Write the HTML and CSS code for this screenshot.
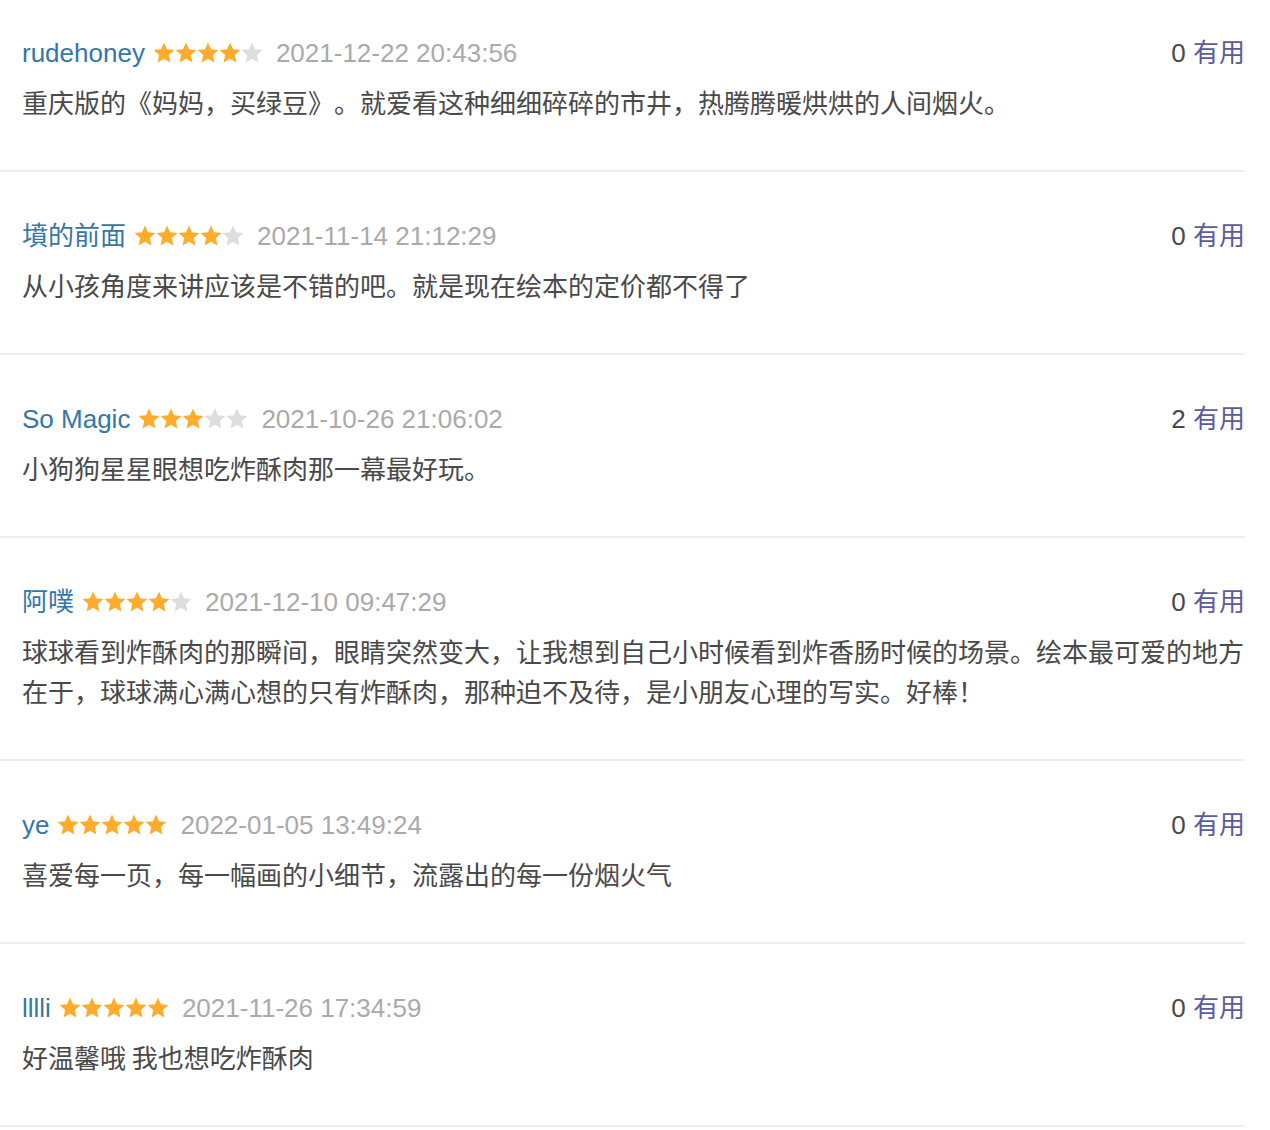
FILE: index.html
```html
<!DOCTYPE html>
<html lang="zh-CN">
<head>
<meta charset="utf-8">
<title>短评</title>
<link rel="stylesheet" href="styles.css">
</head>
<body>
<div class="list">
  <div class="item">
    <div class="head">
      <div class="info">
        <a class="name">rudehoney</a>
        <span class="stars"><svg viewBox="0 0 24 24"><polygon class="on" points="12,0.6 15.3,8 23.4,8.8 17.3,14.3 19,22.4 12,18.3 5,22.4 6.7,14.3 0.6,8.8 8.7,8"/></svg><svg viewBox="0 0 24 24"><polygon class="on" points="12,0.6 15.3,8 23.4,8.8 17.3,14.3 19,22.4 12,18.3 5,22.4 6.7,14.3 0.6,8.8 8.7,8"/></svg><svg viewBox="0 0 24 24"><polygon class="on" points="12,0.6 15.3,8 23.4,8.8 17.3,14.3 19,22.4 12,18.3 5,22.4 6.7,14.3 0.6,8.8 8.7,8"/></svg><svg viewBox="0 0 24 24"><polygon class="on" points="12,0.6 15.3,8 23.4,8.8 17.3,14.3 19,22.4 12,18.3 5,22.4 6.7,14.3 0.6,8.8 8.7,8"/></svg><svg viewBox="0 0 24 24"><polygon class="off" points="12,0.6 15.3,8 23.4,8.8 17.3,14.3 19,22.4 12,18.3 5,22.4 6.7,14.3 0.6,8.8 8.7,8"/></svg></span>
        <span class="time">2021-12-22 20:43:56</span>
      </div>
      <div class="vote"><span class="count">0</span> <a class="useful">有用</a></div>
    </div>
    <p class="text">重庆版的《妈妈，买绿豆》。就爱看这种细细碎碎的市井，热腾腾暖烘烘的人间烟火。</p>
  </div>
  <div class="item">
    <div class="head">
      <div class="info">
        <a class="name">墳的前面</a>
        <span class="stars"><svg viewBox="0 0 24 24"><polygon class="on" points="12,0.6 15.3,8 23.4,8.8 17.3,14.3 19,22.4 12,18.3 5,22.4 6.7,14.3 0.6,8.8 8.7,8"/></svg><svg viewBox="0 0 24 24"><polygon class="on" points="12,0.6 15.3,8 23.4,8.8 17.3,14.3 19,22.4 12,18.3 5,22.4 6.7,14.3 0.6,8.8 8.7,8"/></svg><svg viewBox="0 0 24 24"><polygon class="on" points="12,0.6 15.3,8 23.4,8.8 17.3,14.3 19,22.4 12,18.3 5,22.4 6.7,14.3 0.6,8.8 8.7,8"/></svg><svg viewBox="0 0 24 24"><polygon class="on" points="12,0.6 15.3,8 23.4,8.8 17.3,14.3 19,22.4 12,18.3 5,22.4 6.7,14.3 0.6,8.8 8.7,8"/></svg><svg viewBox="0 0 24 24"><polygon class="off" points="12,0.6 15.3,8 23.4,8.8 17.3,14.3 19,22.4 12,18.3 5,22.4 6.7,14.3 0.6,8.8 8.7,8"/></svg></span>
        <span class="time">2021-11-14 21:12:29</span>
      </div>
      <div class="vote"><span class="count">0</span> <a class="useful">有用</a></div>
    </div>
    <p class="text">从小孩角度来讲应该是不错的吧。就是现在绘本的定价都不得了</p>
  </div>
  <div class="item">
    <div class="head">
      <div class="info">
        <a class="name">So Magic</a>
        <span class="stars"><svg viewBox="0 0 24 24"><polygon class="on" points="12,0.6 15.3,8 23.4,8.8 17.3,14.3 19,22.4 12,18.3 5,22.4 6.7,14.3 0.6,8.8 8.7,8"/></svg><svg viewBox="0 0 24 24"><polygon class="on" points="12,0.6 15.3,8 23.4,8.8 17.3,14.3 19,22.4 12,18.3 5,22.4 6.7,14.3 0.6,8.8 8.7,8"/></svg><svg viewBox="0 0 24 24"><polygon class="on" points="12,0.6 15.3,8 23.4,8.8 17.3,14.3 19,22.4 12,18.3 5,22.4 6.7,14.3 0.6,8.8 8.7,8"/></svg><svg viewBox="0 0 24 24"><polygon class="off" points="12,0.6 15.3,8 23.4,8.8 17.3,14.3 19,22.4 12,18.3 5,22.4 6.7,14.3 0.6,8.8 8.7,8"/></svg><svg viewBox="0 0 24 24"><polygon class="off" points="12,0.6 15.3,8 23.4,8.8 17.3,14.3 19,22.4 12,18.3 5,22.4 6.7,14.3 0.6,8.8 8.7,8"/></svg></span>
        <span class="time">2021-10-26 21:06:02</span>
      </div>
      <div class="vote"><span class="count">2</span> <a class="useful">有用</a></div>
    </div>
    <p class="text">小狗狗星星眼想吃炸酥肉那一幕最好玩。</p>
  </div>
  <div class="item">
    <div class="head">
      <div class="info">
        <a class="name">阿噗</a>
        <span class="stars"><svg viewBox="0 0 24 24"><polygon class="on" points="12,0.6 15.3,8 23.4,8.8 17.3,14.3 19,22.4 12,18.3 5,22.4 6.7,14.3 0.6,8.8 8.7,8"/></svg><svg viewBox="0 0 24 24"><polygon class="on" points="12,0.6 15.3,8 23.4,8.8 17.3,14.3 19,22.4 12,18.3 5,22.4 6.7,14.3 0.6,8.8 8.7,8"/></svg><svg viewBox="0 0 24 24"><polygon class="on" points="12,0.6 15.3,8 23.4,8.8 17.3,14.3 19,22.4 12,18.3 5,22.4 6.7,14.3 0.6,8.8 8.7,8"/></svg><svg viewBox="0 0 24 24"><polygon class="on" points="12,0.6 15.3,8 23.4,8.8 17.3,14.3 19,22.4 12,18.3 5,22.4 6.7,14.3 0.6,8.8 8.7,8"/></svg><svg viewBox="0 0 24 24"><polygon class="off" points="12,0.6 15.3,8 23.4,8.8 17.3,14.3 19,22.4 12,18.3 5,22.4 6.7,14.3 0.6,8.8 8.7,8"/></svg></span>
        <span class="time">2021-12-10 09:47:29</span>
      </div>
      <div class="vote"><span class="count">0</span> <a class="useful">有用</a></div>
    </div>
    <p class="text">球球看到炸酥肉的那瞬间，眼睛突然变大，让我想到自己小时候看到炸香肠时候的场景。绘本最可爱的地方在于，球球满心满心想的只有炸酥肉，那种迫不及待，是小朋友心理的写实。好棒！</p>
  </div>
  <div class="item">
    <div class="head">
      <div class="info">
        <a class="name">ye</a>
        <span class="stars"><svg viewBox="0 0 24 24"><polygon class="on" points="12,0.6 15.3,8 23.4,8.8 17.3,14.3 19,22.4 12,18.3 5,22.4 6.7,14.3 0.6,8.8 8.7,8"/></svg><svg viewBox="0 0 24 24"><polygon class="on" points="12,0.6 15.3,8 23.4,8.8 17.3,14.3 19,22.4 12,18.3 5,22.4 6.7,14.3 0.6,8.8 8.7,8"/></svg><svg viewBox="0 0 24 24"><polygon class="on" points="12,0.6 15.3,8 23.4,8.8 17.3,14.3 19,22.4 12,18.3 5,22.4 6.7,14.3 0.6,8.8 8.7,8"/></svg><svg viewBox="0 0 24 24"><polygon class="on" points="12,0.6 15.3,8 23.4,8.8 17.3,14.3 19,22.4 12,18.3 5,22.4 6.7,14.3 0.6,8.8 8.7,8"/></svg><svg viewBox="0 0 24 24"><polygon class="on" points="12,0.6 15.3,8 23.4,8.8 17.3,14.3 19,22.4 12,18.3 5,22.4 6.7,14.3 0.6,8.8 8.7,8"/></svg></span>
        <span class="time">2022-01-05 13:49:24</span>
      </div>
      <div class="vote"><span class="count">0</span> <a class="useful">有用</a></div>
    </div>
    <p class="text">喜爱每一页，每一幅画的小细节，流露出的每一份烟火气</p>
  </div>
  <div class="item">
    <div class="head">
      <div class="info">
        <a class="name">lllli</a>
        <span class="stars"><svg viewBox="0 0 24 24"><polygon class="on" points="12,0.6 15.3,8 23.4,8.8 17.3,14.3 19,22.4 12,18.3 5,22.4 6.7,14.3 0.6,8.8 8.7,8"/></svg><svg viewBox="0 0 24 24"><polygon class="on" points="12,0.6 15.3,8 23.4,8.8 17.3,14.3 19,22.4 12,18.3 5,22.4 6.7,14.3 0.6,8.8 8.7,8"/></svg><svg viewBox="0 0 24 24"><polygon class="on" points="12,0.6 15.3,8 23.4,8.8 17.3,14.3 19,22.4 12,18.3 5,22.4 6.7,14.3 0.6,8.8 8.7,8"/></svg><svg viewBox="0 0 24 24"><polygon class="on" points="12,0.6 15.3,8 23.4,8.8 17.3,14.3 19,22.4 12,18.3 5,22.4 6.7,14.3 0.6,8.8 8.7,8"/></svg><svg viewBox="0 0 24 24"><polygon class="on" points="12,0.6 15.3,8 23.4,8.8 17.3,14.3 19,22.4 12,18.3 5,22.4 6.7,14.3 0.6,8.8 8.7,8"/></svg></span>
        <span class="time">2021-11-26 17:34:59</span>
      </div>
      <div class="vote"><span class="count">0</span> <a class="useful">有用</a></div>
    </div>
    <p class="text">好温馨哦 我也想吃炸酥肉</p>
  </div>
</div>
</body>
</html>
```

FILE: styles.css
```css
html, body {
  margin: 0;
  padding: 0;
  background: #fff;
}

body {
  font-family: "Liberation Sans", "Noto Sans CJK SC", sans-serif;
  color: #494949;
}

.list {
  width: 1245px;
}

.item {
  padding: 45px 0 48px 22px;
  border-bottom: 2px solid #eeeeee;
}

.item:first-child {
  padding-top: 34px;
}

.head {
  display: flex;
  justify-content: space-between;
  align-items: center;
  height: 38px;
  line-height: 38px;
}

.info {
  display: flex;
  align-items: center;
  height: 38px;
}

.name {
  font-size: 26px;
  line-height: 38px;
  color: #3377aa;
  text-decoration: none;
}

.stars {
  display: flex;
  margin: 0 13px 0 8px;
}

.stars svg {
  width: 22px;
  height: 22px;
  flex: none;
  display: block;
}

.on {
  fill: #ffac2d;
}

.off {
  fill: #dddddd;
}

.time {
  font-size: 26px;
  line-height: 38px;
  color: #aaaaaa;
}

.vote {
  font-size: 26px;
  line-height: 38px;
  height: 38px;
  white-space: nowrap;
}

.count {
  color: #494949;
}

.useful {
  color: #5b5b9d;
  text-decoration: none;
}

.text {
  margin: 10px 0 0 0;
  font-size: 26px;
  line-height: 40px;
  font-family: "Noto Sans CJK SC", "Liberation Sans", sans-serif;
  text-spacing-trim: space-all;
  color: #494949;
}
```
